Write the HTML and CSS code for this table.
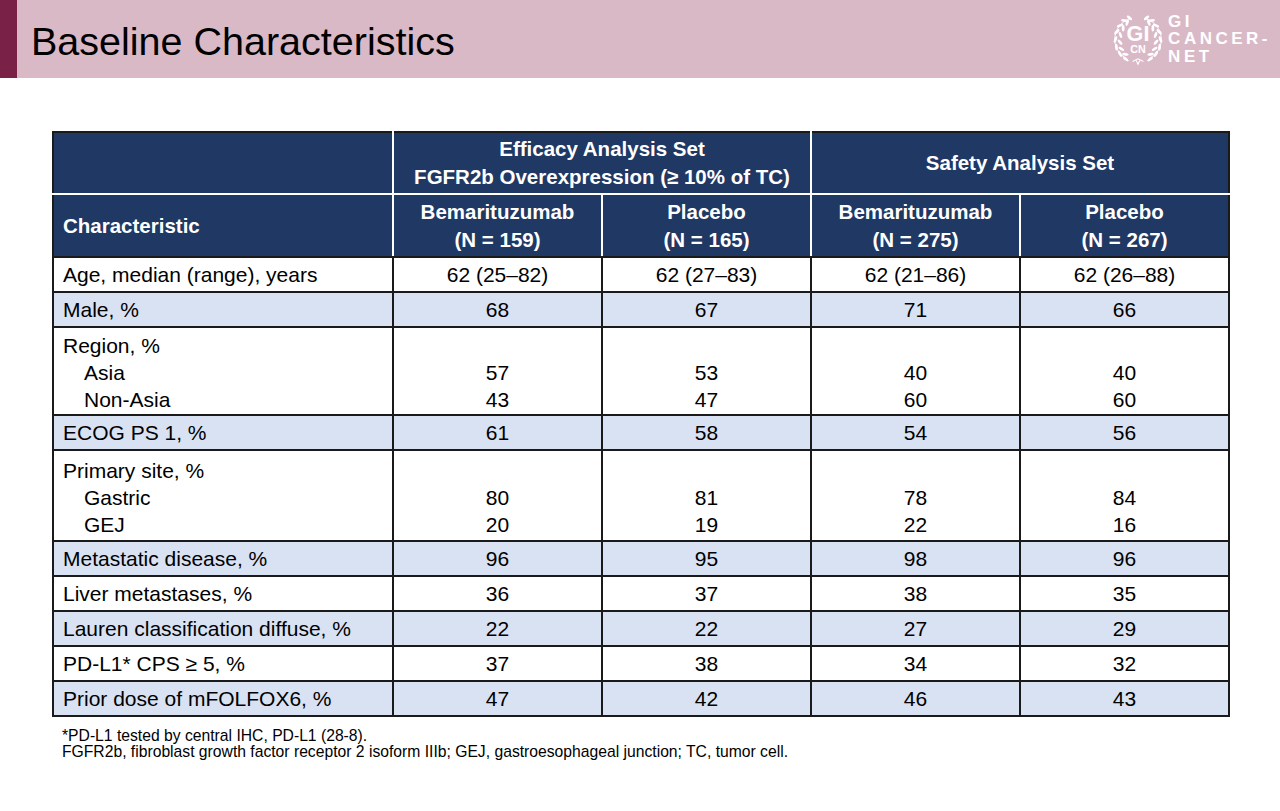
FILE: index.html
```html
<!DOCTYPE html>
<html lang="en">
<head>
<meta charset="utf-8">
<title>Baseline Characteristics</title>
<link rel="stylesheet" href="styles.css">
</head>
<body>
<header class="banner">
  <div class="accent"></div>
  <h1 class="title">Baseline Characteristics</h1>
  <div class="logo">
    <svg class="wreath" width="54" height="54" viewBox="0 0 60 60" aria-hidden="true">
      <g id="half" fill="#fff">
        <path d="M38 7 A24 24 0 0 1 42 52" fill="none" stroke="#fff" stroke-width="1"/>
        <ellipse cx="39.5" cy="6.5" rx="3.6" ry="1.5" transform="rotate(-40 39.5 6.5)"/>
        <ellipse cx="45" cy="9.5" rx="3.8" ry="1.5" transform="rotate(-10 45 9.5)"/>
        <ellipse cx="42" cy="12" rx="3.6" ry="1.5" transform="rotate(70 42 12)"/>
        <ellipse cx="50" cy="15" rx="3.8" ry="1.5" transform="rotate(20 50 15)"/>
        <ellipse cx="46.5" cy="18" rx="3.6" ry="1.5" transform="rotate(90 46.5 18)"/>
        <ellipse cx="53.5" cy="22" rx="3.8" ry="1.5" transform="rotate(45 53.5 22)"/>
        <ellipse cx="49.5" cy="25.5" rx="3.6" ry="1.5" transform="rotate(110 49.5 25.5)"/>
        <ellipse cx="55" cy="30.5" rx="3.8" ry="1.5" transform="rotate(70 55 30.5)"/>
        <ellipse cx="50" cy="33.5" rx="3.6" ry="1.5" transform="rotate(130 50 33.5)"/>
        <ellipse cx="54" cy="39" rx="3.8" ry="1.5" transform="rotate(95 54 39)"/>
        <ellipse cx="48.5" cy="41" rx="3.6" ry="1.5" transform="rotate(150 48.5 41)"/>
        <ellipse cx="50" cy="46.5" rx="3.8" ry="1.5" transform="rotate(120 50 46.5)"/>
        <ellipse cx="44" cy="47" rx="3.6" ry="1.5" transform="rotate(170 44 47)"/>
        <ellipse cx="43.5" cy="52.5" rx="3.6" ry="1.5" transform="rotate(145 43.5 52.5)"/>
      </g>
      <use href="#half" transform="translate(60 0) scale(-1 1)"/>
      <path d="M24 55 L30 52 L36 55 M28 54 L30 58 L32 54" fill="none" stroke="#fff" stroke-width="1.2"/>
      <text x="30" y="32" class="gi">GI</text>
      <text x="30" y="46" class="cn">CN</text>
    </svg>
    <div class="logo-text">
      <span>GI</span>
      <span>CANCER-</span>
      <span>NET</span>
    </div>
  </div>
</header>

<main class="content">
  <table class="data">
    <colgroup>
      <col class="c-first">
      <col class="c-val"><col class="c-val"><col class="c-val"><col class="c-val">
    </colgroup>
    <thead>
      <tr class="h1">
        <th></th>
        <th colspan="2">Efficacy Analysis Set<br>FGFR2b Overexpression (≥ 10% of TC)</th>
        <th colspan="2">Safety Analysis Set</th>
      </tr>
      <tr class="h2">
        <th class="left">Characteristic</th>
        <th>Bemarituzumab<br>(N = 159)</th>
        <th>Placebo<br>(N = 165)</th>
        <th>Bemarituzumab<br>(N = 275)</th>
        <th>Placebo<br>(N = 267)</th>
      </tr>
    </thead>
    <tbody>
      <tr><td>Age, median (range), years</td><td>62 (25–82)</td><td>62 (27–83)</td><td>62 (21–86)</td><td>62 (26–88)</td></tr>
      <tr class="alt"><td>Male, %</td><td>68</td><td>67</td><td>71</td><td>66</td></tr>
      <tr class="multi m1">
        <td><span class="ln">Region, %</span><span class="ln sub">Asia</span><span class="ln sub">Non-Asia</span></td>
        <td><span class="ln">&nbsp;</span><span class="ln">57</span><span class="ln">43</span></td>
        <td><span class="ln">&nbsp;</span><span class="ln">53</span><span class="ln">47</span></td>
        <td><span class="ln">&nbsp;</span><span class="ln">40</span><span class="ln">60</span></td>
        <td><span class="ln">&nbsp;</span><span class="ln">40</span><span class="ln">60</span></td>
      </tr>
      <tr class="alt"><td>ECOG PS 1, %</td><td>61</td><td>58</td><td>54</td><td>56</td></tr>
      <tr class="multi m2">
        <td><span class="ln">Primary site, %</span><span class="ln sub">Gastric</span><span class="ln sub">GEJ</span></td>
        <td><span class="ln">&nbsp;</span><span class="ln">80</span><span class="ln">20</span></td>
        <td><span class="ln">&nbsp;</span><span class="ln">81</span><span class="ln">19</span></td>
        <td><span class="ln">&nbsp;</span><span class="ln">78</span><span class="ln">22</span></td>
        <td><span class="ln">&nbsp;</span><span class="ln">84</span><span class="ln">16</span></td>
      </tr>
      <tr class="alt"><td>Metastatic disease, %</td><td>96</td><td>95</td><td>98</td><td>96</td></tr>
      <tr><td>Liver metastases, %</td><td>36</td><td>37</td><td>38</td><td>35</td></tr>
      <tr class="alt"><td>Lauren classification diffuse, %</td><td>22</td><td>22</td><td>27</td><td>29</td></tr>
      <tr><td>PD-L1* CPS ≥ 5, %</td><td>37</td><td>38</td><td>34</td><td>32</td></tr>
      <tr class="alt"><td>Prior dose of mFOLFOX6, %</td><td>47</td><td>42</td><td>46</td><td>43</td></tr>
    </tbody>
  </table>
  <div class="notes">
    <p>*PD-L1 tested by central IHC, PD-L1 (28-8).</p>
    <p>FGFR2b, fibroblast growth factor receptor 2 isoform IIIb; GEJ, gastroesophageal junction; TC, tumor cell.</p>
  </div>
</main>
</body>
</html>
```

FILE: styles.css
```css
html, body {
  margin: 0;
  padding: 0;
  background: #ffffff;
  font-family: "Liberation Sans", Arial, sans-serif;
  color: #000;
}

.banner {
  height: 78px;
  background: #dab9c7;
  display: flex;
  align-items: center;
}

.accent {
  width: 17px;
  align-self: stretch;
  background: #7a2148;
}

.title {
  margin: 0 0 0 14px;
  font-weight: normal;
  font-size: 39.5px;
  line-height: 1;
  padding-top: 6px;
  flex: 1;
}

.logo {
  display: flex;
  align-items: center;
  gap: 3px;
  margin-right: 9px;
}

.wreath .gi {
  font-family: "Liberation Sans", Arial, sans-serif;
  font-size: 24px;
  font-weight: bold;
  fill: #fff;
  text-anchor: middle;
}

.wreath .cn {
  font-family: "Liberation Sans", Arial, sans-serif;
  font-size: 12px;
  font-weight: bold;
  fill: #fff;
  text-anchor: middle;
}

.logo-text {
  display: flex;
  flex-direction: column;
  color: #fff;
  font-weight: bold;
  font-size: 17px;
  line-height: 17.5px;
  letter-spacing: 3.5px;
}

.content {
  padding: 53px 52px 0 52px;
}

.data {
  width: 1176px;
  border-collapse: collapse;
  table-layout: fixed;
  border: 2px solid #1a1a1a;
  font-size: 21px;
}

.c-first { width: 340px; }
.c-val { width: 209px; }

.data th {
  background: #203864;
  color: #fff;
  font-weight: bold;
  font-size: 20.5px;
  line-height: 28px;
  text-align: center;
  border: 2px solid #fff;
  padding: 0 4px;
}

.data thead tr:first-child th { border-top: 2px solid #1a1a1a; }
.data thead th:first-child { border-left: 2px solid #1a1a1a; }
.data thead th:last-child { border-right: 2px solid #1a1a1a; }
.data thead tr.h2 th { border-bottom: 2px solid #1a1a1a; }

.data tr.h1 th { height: 60px; }
.data tr.h2 th { height: 61px; }

.data th.left {
  text-align: left;
  padding-left: 9px;
}

.data td {
  border: 2px solid #1a1a1a;
  text-align: center;
  height: 33px;
  padding: 0 4px;
  line-height: 27px;
}

.data td:first-child {
  text-align: left;
  padding-left: 9px;
}

.data tr.alt td { background: #d9e2f3; }

.data tr.m1 td { padding-top: 4px; padding-bottom: 1px; }
.data tr.m2 td { padding-top: 6px; padding-bottom: 2px; }

.ln { display: block; }
.ln.sub { padding-left: 21px; }

.notes {
  margin-top: 11px;
  font-size: 15.7px;
  line-height: 16px;
  padding-left: 10px;
}

.notes p { margin: 0; }
```
